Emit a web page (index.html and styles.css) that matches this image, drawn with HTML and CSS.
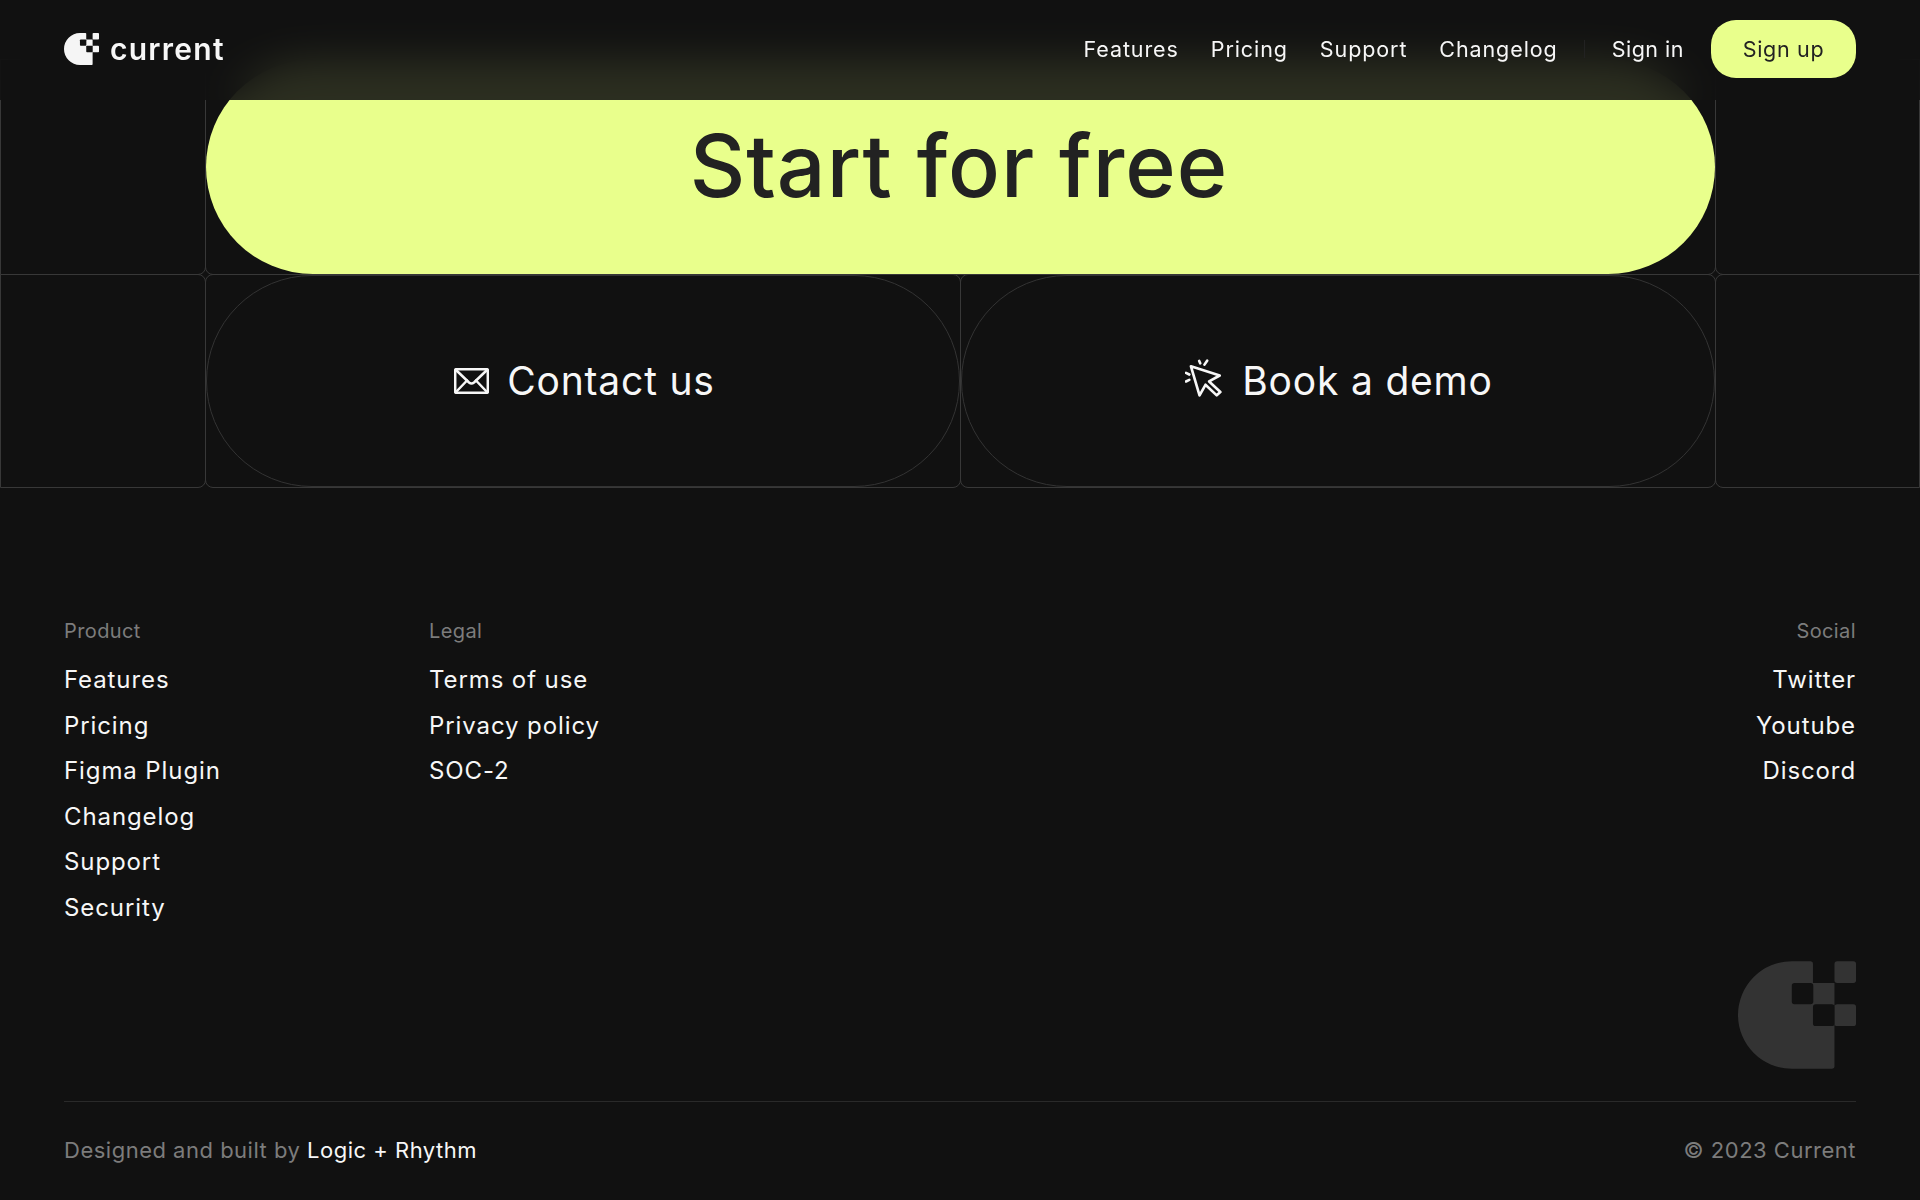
FILE: index.html
```html
<!DOCTYPE html>
<html lang="en">
<head>
<meta charset="utf-8">
<title>Current</title>
<link rel="stylesheet" href="styles.css">
</head>
<body>
<svg class="defs" width="0" height="0" aria-hidden="true">
  <symbol id="mark" viewBox="115 65 351 320">
    <path class="mark-fill" d="M275 65H330q8 0 8 8V130H402V377q0 8-8 8H275A160 160 0 0 1 275 65Z"/>
    <rect class="mark-fill" x="402" y="65" width="64" height="65" rx="8"/>
    <rect class="mark-fill" x="402" y="193" width="64" height="65" rx="8"/>
    <rect class="mark-hole" x="275" y="130" width="64" height="63" rx="8"/>
    <rect class="mark-hole" x="338" y="193" width="64" height="65" rx="8"/>
  </symbol>
</svg>

<header class="topbar">
  <a class="brand" href="#">
    <svg class="brand-mark"><use href="#mark"/></svg>
    <span class="brand-name">current</span>
  </a>
  <nav class="nav">
    <a href="#">Features</a>
    <a href="#">Pricing</a>
    <a href="#">Support</a>
    <a href="#">Changelog</a>
    <span class="nav-sep"></span>
    <a class="signin" href="#">Sign in</a>
    <a class="signup" href="#">Sign up</a>
  </nav>
</header>

<main class="cta">
  <div class="cell cell-left"></div>
  <div class="cell cell-wide"><a class="pill pill-primary" href="#">Start for free</a></div>
  <div class="cell cell-right"></div>
  <div class="cell cell-left"></div>
  <div class="cell">
    <a class="pill pill-ghost pill-contact" href="#">
      <svg class="icon-mail" viewBox="0 0 35 26" fill="none" stroke="currentColor" stroke-width="2.500" stroke-linejoin="round" stroke-linecap="round">
        <rect x="1.200" y="1.200" width="32.600" height="23.600" rx="1"/>
        <path d="M2 2 15 14.500Q17.500 16.500 20 14.500L33 2"/>
        <path d="M2 24 13 12.500M33 24 22 12.500"/>
      </svg>
      <span>Contact us</span>
    </a>
  </div>
  <div class="cell">
    <a class="pill pill-ghost pill-demo" href="#">
      <svg class="icon-cursor" viewBox="80 60 110 115" fill="none" stroke="currentColor" stroke-width="8" stroke-linejoin="round" stroke-linecap="round">
        <path d="M97 82 184 110 152 128 186 160 175 170 141 138 123 170Z"/>
        <path d="M122 66 125 73M146 65 138 77M82 102 92 107M82 128 92 123"/>
      </svg>
      <span>Book a demo</span>
    </a>
  </div>
  <div class="cell cell-right"></div>
</main>

<footer class="footer">
  <div class="columns">
    <section class="col col-product">
      <h2>Product</h2>
      <a href="#">Features</a>
      <a href="#">Pricing</a>
      <a href="#">Figma Plugin</a>
      <a href="#">Changelog</a>
      <a href="#">Support</a>
      <a href="#">Security</a>
    </section>
    <section class="col">
      <h2>Legal</h2>
      <a href="#">Terms of use</a>
      <a href="#">Privacy policy</a>
      <a href="#">SOC-2</a>
    </section>
    <section class="col col-social">
      <h2>Social</h2>
      <a href="#">Twitter</a>
      <a href="#">Youtube</a>
      <a href="#">Discord</a>
    </section>
  </div>
  <div class="footer-mark"><svg class="big-mark"><use href="#mark"/></svg></div>
  <div class="legal">
    <p>Designed and built by <a href="#">Logic + Rhythm</a></p>
    <p>© 2023 Current</p>
  </div>
</footer>
</body>
</html>
```
FILE: styles.css
```css
:root {
  --bg: #111111;
  --line: #383838;
  --lime: #e9ff8c;
  --ink: #222222;
  --white: #f7f7f7;
  --muted: #7c7c7c;
}
* { box-sizing: border-box; }
html, body { margin: 0; height: 1200px; overflow: hidden; }
body {
  background: var(--bg);
  color: var(--white);
  font-family: Inter, "Liberation Sans", sans-serif;
}
a { color: inherit; text-decoration: none; }
.defs { position: absolute; }
.mark-fill { fill: currentColor; }
.mark-hole { fill: var(--bg); }

.topbar {
  position: absolute;
  top: 0; left: 0; right: 0;
  z-index: 5;
  height: 100px;
  padding: 0 64px 2px;
  display: flex;
  align-items: center;
  justify-content: space-between;
  background: rgba(17, 17, 17, 0.88);
  backdrop-filter: blur(20px);
}
.brand { display: flex; align-items: center; gap: 11px; }
.brand-mark { width: 35px; height: 32px; display: block; color: #f5f5f5; }
.brand-name { font-size: 30px; font-weight: 600; letter-spacing: 1.250px; line-height: 32px; }
.nav { display: flex; align-items: center; gap: 32px; font-size: 21.500px; letter-spacing: 0.900px; }
.nav-sep { width: 1px; height: 18px; background: #222; margin: 0 -5px 0 -6px; }
.signin { letter-spacing: 0.500px; }
.signup {
  margin-left: -5px;
  width: 145px; height: 58px;
  display: flex; align-items: center; justify-content: center;
  background: var(--lime);
  color: var(--ink);
  border-radius: 25px;
  letter-spacing: 0.700px;
}

.cta {
  padding-top: 59px;
  display: grid;
  grid-template-columns: 205px 755px 755px 205px;
  grid-template-rows: 215px 213px;
}
.cell {
  border: 1px solid var(--line);
  border-radius: 8px;
  margin: 0 -1px -1px 0;
  min-width: 0;
}
.cell-left { border-top-left-radius: 0; border-bottom-left-radius: 0; }
.cell-right { margin-right: 0; border-top-right-radius: 0; border-bottom-right-radius: 0; }
.cell-wide { grid-column: span 2; }
.pill {
  display: flex; align-items: center; justify-content: center;
  height: 100%;
  border-radius: 107px;
}
.pill-primary {
  background: var(--lime);
  color: var(--ink);
  font-size: 86px; font-weight: 500; letter-spacing: 1px;
  padding: 0 3px 3px 0;
}
.pill-ghost {
  border: 1px solid #333333;
  font-size: 39px; font-weight: 400; letter-spacing: 0.800px;
}
.pill-ghost span { margin-top: -2px; }
.pill-contact { gap: 18px; padding-left: 3px; }
.pill-demo { gap: 20px; padding-left: 2px; }
.icon-mail { width: 35px; height: 26px; }
.icon-cursor { width: 37px; height: 38px; margin-top: -6px; }

.footer { padding: 0 64px; }
.columns { display: flex; padding-top: 126px; }
.col { display: flex; flex-direction: column; font-size: 24px; letter-spacing: 0.900px; line-height: 45.600px; }
.col-product { width: 365px; }
.col-social { margin-left: auto; text-align: right; }
.col h2 {
  margin: 0 0 8px;
  font-size: 20px; font-weight: 400;
  letter-spacing: 0.400px;
  line-height: 36px;
  color: var(--muted);
}
.footer-mark { display: flex; justify-content: flex-end; margin-top: 30px; }
.big-mark { width: 118px; height: 108px; display: block; color: #333333; }
.legal {
  margin-top: 32px;
  border-top: 1px solid #2a2a2a;
  padding-top: 30px;
  display: flex;
  justify-content: space-between;
  font-size: 22px;
  letter-spacing: 0.500px;
  color: var(--muted);
}
.legal p { margin: 0; line-height: 36px; }
.legal a { color: var(--white); }
```
